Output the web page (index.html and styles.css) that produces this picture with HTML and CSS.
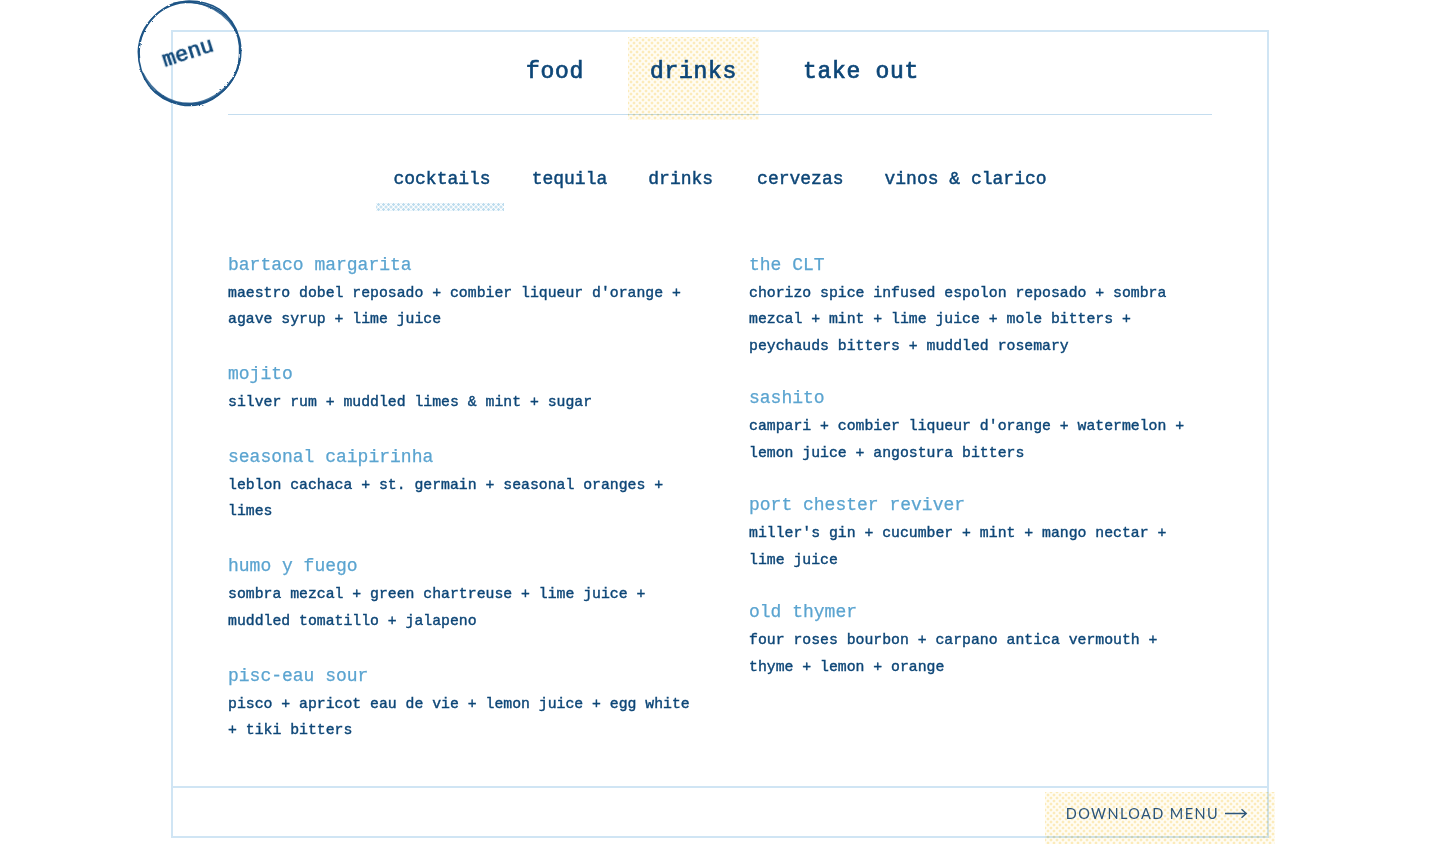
FILE: index.html
```html
<!DOCTYPE html>
<html lang="en">
<head>
<meta charset="utf-8">
<title>menu</title>
<link rel="stylesheet" href="styles.css">
</head>
<body>
<main class="frame">
  <div class="stamp">
    <svg class="stamp-ring" width="116" height="116" viewBox="0 0 110 110" fill="none" stroke="#1d5486">
      <defs>
        <filter id="rough" x="-10%" y="-10%" width="120%" height="120%">
          <feTurbulence type="fractalNoise" baseFrequency="0.4" numOctaves="2" seed="4"/>
          <feDisplacementMap in="SourceGraphic" scale="2"/>
        </filter>
      </defs>
      <g filter="url(#rough)">
        <path stroke-width="1.6" d="M7 52C8 25 30 5 56 5c14 1 28 5 39 19 6 9 9 20 8 31-1 18-10 32-26 42-9 5-20 7-30 5C21 97 7 76 7 52Z"/>
        <path stroke-width="1.5" d="M8 58C5 30 27 6 52 4c24-1 44 10 51 36 3 15 0 30-10 43-11 14-28 21-46 18-9-1-17-6-24-12"/>
        <path stroke-width="1.8" stroke-opacity=".8" d="M11 72c9 18 26 30 47 29 14-1 29-10 38-23"/>
        <path stroke-width="1.4" stroke-opacity=".8" d="M40 6c20-4 44 2 58 24"/>
        <path stroke-width="1.2" stroke-opacity=".7" d="M18 86c12 13 30 18 48 14"/>
      </g>
    </svg>
    <span class="stamp-label">menu</span>
  </div>

  <nav class="tabs">
    <a class="tab">food</a>
    <a class="tab tab-active">drinks</a>
    <a class="tab">take out</a>
  </nav>

  <nav class="subtabs">
    <a class="subtab subtab-active">cocktails</a>
    <a class="subtab">tequila</a>
    <a class="subtab subtab-wide">drinks</a>
    <a class="subtab">cervezas</a>
    <a class="subtab">vinos &amp; clarico</a>
  </nav>

  <section class="columns">
    <div class="column column-left">
      <article class="drink">
        <h3>bartaco margarita</h3>
        <p>maestro dobel reposado + combier liqueur d'orange +<br>agave syrup + lime juice</p>
      </article>
      <article class="drink">
        <h3>mojito</h3>
        <p>silver rum + muddled limes &amp; mint + sugar</p>
      </article>
      <article class="drink">
        <h3>seasonal caipirinha</h3>
        <p>leblon cachaca + st. germain + seasonal oranges +<br>limes</p>
      </article>
      <article class="drink">
        <h3>humo y fuego</h3>
        <p>sombra mezcal + green chartreuse + lime juice +<br>muddled tomatillo + jalapeno</p>
      </article>
      <article class="drink">
        <h3>pisc-eau sour</h3>
        <p>pisco + apricot eau de vie + lemon juice + egg white<br>+ tiki bitters</p>
      </article>
    </div>
    <div class="column column-right">
      <article class="drink">
        <h3>the CLT</h3>
        <p>chorizo spice infused espolon reposado + sombra<br>mezcal + mint + lime juice + mole bitters +<br>peychauds bitters + muddled rosemary</p>
      </article>
      <article class="drink">
        <h3>sashito</h3>
        <p>campari + combier liqueur d'orange + watermelon +<br>lemon juice + angostura bitters</p>
      </article>
      <article class="drink">
        <h3>port chester reviver</h3>
        <p>miller's gin + cucumber + mint + mango nectar +<br>lime juice</p>
      </article>
      <article class="drink">
        <h3>old thymer</h3>
        <p>four roses bourbon + carpano antica vermouth +<br>thyme + lemon + orange</p>
      </article>
    </div>
  </section>

  <footer class="footer">
    <a class="download">
      <span>DOWNLOAD MENU</span>
      <svg width="23" height="11" viewBox="0 0 23 11" fill="none" stroke="#2b5479" stroke-width="1.3">
        <path d="M0 5.5h21M16.5 1.2l4.8 4.3-4.8 4.3"/>
      </svg>
    </a>
  </footer>
</main>
</body>
</html>
```

FILE: styles.css
```css
* { box-sizing: border-box; }

html, body { margin: 0; height: 844px; overflow: hidden; background: #fff; }

body {
  padding-top: 30px;
  font-family: "Liberation Mono", "DejaVu Sans Mono", monospace;
  color: #0d4677;
}

.frame {
  position: relative;
  width: 1098px;
  height: 808px;
  margin-left: 171px;
  padding: 5px 55px 0;
  border: 2px solid #d0e5f4;
  display: flex;
  flex-direction: column;
}

.stamp {
  position: absolute;
  left: -42px;
  top: -35px;
  width: 116px;
  height: 116px;
}

.stamp-ring { display: block; }

.stamp-label {
  position: absolute;
  left: 31px;
  top: 45px;
  font-size: 22px;
  line-height: 24px;
  -webkit-text-stroke: 0.7px currentColor;
  transform: rotate(-18deg);
  filter: blur(.25px);
}

.tabs {
  display: flex;
  justify-content: center;
  gap: 22px;
  height: 78px;
  padding-left: 5px;
  border-bottom: 1px solid #c4ddef;
}

.tab {
  height: 83px;
  padding: 0 22px;
  font-size: 23px;
  line-height: 70px;
  letter-spacing: 0.7px;
  -webkit-text-stroke: 0.7px currentColor;
  filter: blur(.3px);
}

.tab-active {
  background-color: #fffdf4;
  background-image: radial-gradient(circle, #fcebba 1.2px, transparent 1.7px), radial-gradient(circle, #fcebba 1.2px, transparent 1.7px);
  background-size: 6px 6px;
  background-position: 0 0, 3px 3px;
  mix-blend-mode: multiply;
}

.subtabs {
  display: flex;
  justify-content: center;
  gap: 7px;
  margin-top: 48px;
}

.subtab {
  position: relative;
  padding: 0 17px;
  font-size: 18px;
  line-height: 32px;
  -webkit-text-stroke: 0.45px currentColor;
  filter: blur(.25px);
}

.subtab-wide { margin-right: 3px; }

.subtab-active::after {
  content: "";
  position: absolute;
  left: 0;
  right: 4px;
  top: 40px;
  height: 8px;
  background-image: radial-gradient(circle, #bcdcee 1.1px, transparent 1.5px), radial-gradient(circle, #bcdcee 1.1px, transparent 1.5px);
  background-size: 5px 5px;
  background-position: 0 -1px, 2.5px 1.5px;
}

.columns {
  display: flex;
  margin-top: 55.5px;
}

.column { display: flex; flex-direction: column; }
.column-left { width: 521px; gap: 26.9px; }
.column-right { gap: 24.4px; }

.drink h3 {
  margin: 0;
  font-size: 18px;
  line-height: 29px;
  font-weight: 400;
  color: #5ba4d0;
  -webkit-text-stroke: 0.25px currentColor;
  filter: blur(.25px);
}

.drink p {
  margin: 0;
  font-size: 14.8px;
  line-height: 26.8px;
  -webkit-text-stroke: 0.4px currentColor;
  white-space: nowrap;
  filter: blur(.2px);
}

.footer {
  position: absolute;
  left: 0;
  right: 0;
  top: 754px;
  height: 50px;
  border-top: 2px solid #d0e5f4;
  display: flex;
  justify-content: flex-end;
}

.download {
  display: flex;
  align-items: center;
  gap: 6px;
  height: 52px;
  margin-top: 4px;
  margin-right: -8px;
  padding: 0 27px 10px 21px;
  font-family: Lato, "Open Sans", sans-serif;
  font-size: 14.5px;
  letter-spacing: 1.4px;
  color: #2b5479;
  background-color: #fffdf4;
  background-image: radial-gradient(circle, #fcebba 1.2px, transparent 1.7px), radial-gradient(circle, #fcebba 1.2px, transparent 1.7px);
  background-size: 6px 6px;
  background-position: 0 0, 3px 3px;
  mix-blend-mode: multiply;
}
```
